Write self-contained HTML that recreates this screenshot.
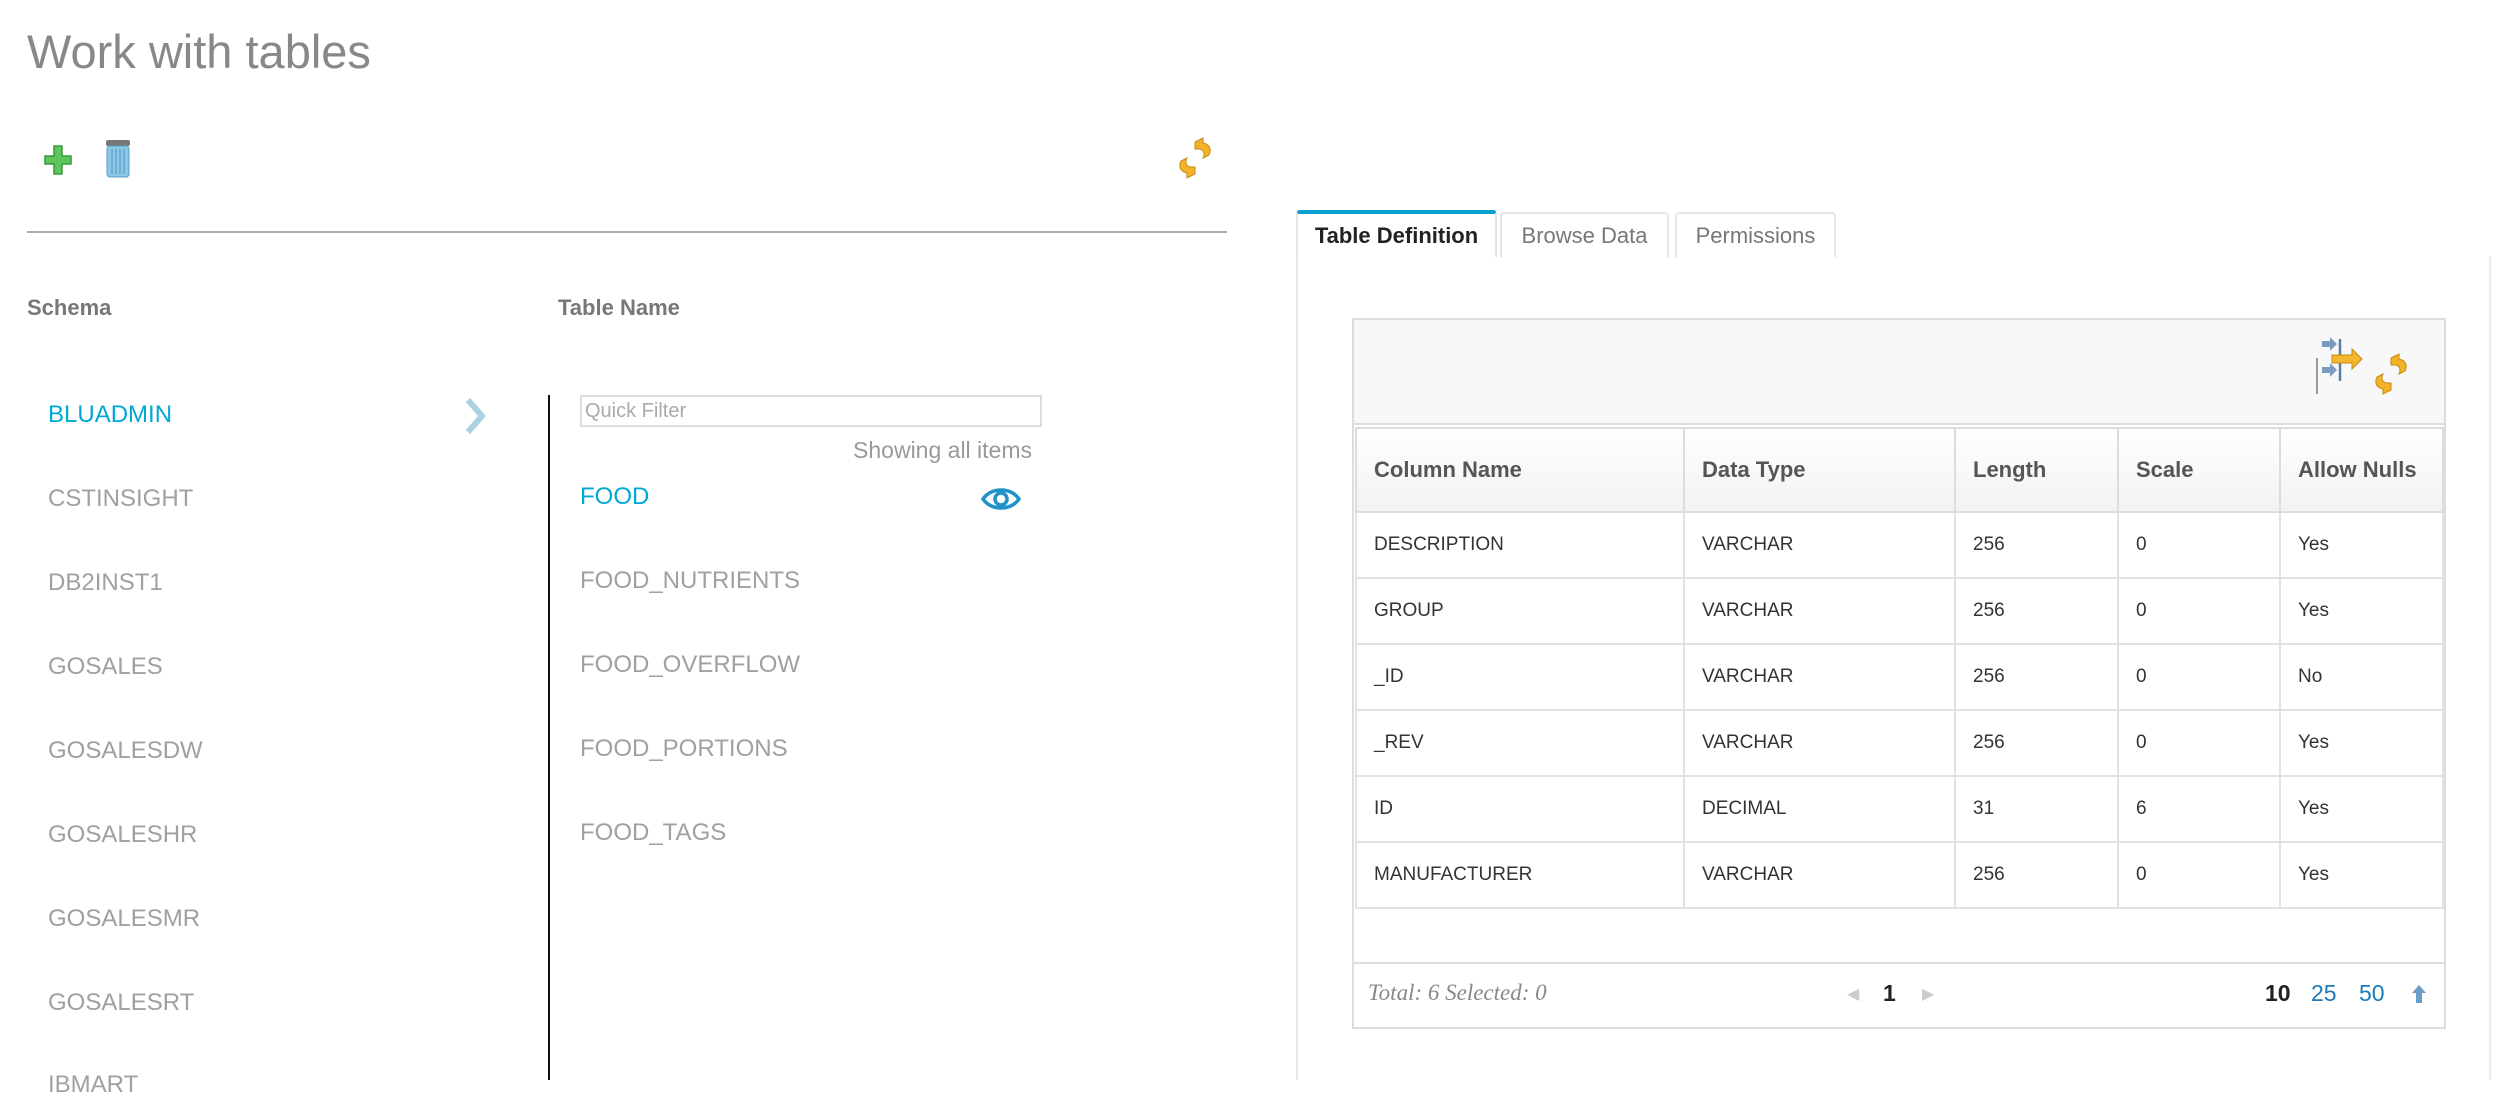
<!DOCTYPE html>
<html><head><meta charset="utf-8"><style>
*{margin:0;padding:0;box-sizing:border-box}
body{width:2506px;height:1080px;background:#fff;position:relative;overflow:hidden;font-family:"Liberation Sans",Arial,sans-serif}
.a{position:absolute;white-space:nowrap}
.sch{font-size:24px;color:#a0a0a0;line-height:30px;height:30px}
.tn{font-size:24px;color:#a0a0a0;line-height:30px;height:30px}
.hd{font-size:22px;font-weight:bold;color:#777}
table{border-collapse:collapse;position:absolute;left:1355px;top:427px;width:1087px;table-layout:fixed}
td,th{border:2px solid #e2e2e2;text-align:left;padding-left:17px;font-size:19px;color:#333;height:66px;font-weight:normal}
th{height:84px;font-weight:bold;font-size:22px;color:#555;background:linear-gradient(#fff,#f2f2f2);border-color:#dcdcdc}
.tab{position:absolute;top:212px;height:45px;border:2px solid #e5e5e5;border-bottom:none;border-radius:4px 4px 0 0;font-size:22px;color:#777;line-height:44px;text-align:center}
</style></head><body>
<div class="a" style="left:27px;top:22px;font-size:47px;color:#888;line-height:60px">Work with tables</div>
<svg class="a" style="left:42px;top:142px" width="32" height="36" viewBox="0 0 32 36"><path d="M12 4h8v10h9v8h-9v10h-8V22H3v-8h9z" fill="#5cc65c" stroke="#3a9a3a" stroke-width="1.5"/></svg>
<svg class="a" style="left:103px;top:138px" width="30" height="42" viewBox="0 0 30 42"><rect x="3" y="2" width="24" height="6" rx="2" fill="#777"/><rect x="4" y="8" width="22" height="31" rx="3" fill="#8cc8e8" stroke="#5a9cc4"/><path d="M9 11v25M13 11v25M17 11v25M21 11v25" stroke="#5a9cc4" stroke-width="1.2"/></svg>
<svg class="a" style="left:1175px;top:136px" width="40" height="44" viewBox="0 0 40 44"><path d="M20 6l8 -4v5c6 1 9 6 6 12l-6 3c2-4 1-8-3-9h-5z" fill="#f2b32a" stroke="#c98a10"/><path d="M20 38l-8 4v-5c-6-1-9-6-6-12l6-3c-2 4-1 8 3 9h5z" fill="#f2b32a" stroke="#c98a10"/></svg>
<div class="a" style="left:27px;top:231px;width:1200px;height:2px;background:#aaa"></div>
<div class="a hd" style="left:27px;top:295px">Schema</div>
<div class="a hd" style="left:558px;top:295px">Table Name</div>
<div class="a sch" style="left:48px;top:400px;color:#00a8d4">BLUADMIN</div>
<svg class="a" style="left:464px;top:398px" width="22" height="36" viewBox="0 0 22 36"><path d="M4 2l14 16L4 34" fill="none" stroke="#a9d3e0" stroke-width="6"/></svg>
<div class="a sch" style="left:48px;top:484px">CSTINSIGHT</div>
<div class="a sch" style="left:48px;top:568px">DB2INST1</div>
<div class="a sch" style="left:48px;top:652px">GOSALES</div>
<div class="a sch" style="left:48px;top:736px">GOSALESDW</div>
<div class="a sch" style="left:48px;top:820px">GOSALESHR</div>
<div class="a sch" style="left:48px;top:904px">GOSALESMR</div>
<div class="a sch" style="left:48px;top:988px">GOSALESRT</div>
<div class="a sch" style="left:48px;top:1070px">IBMART</div>
<div class="a" style="left:548px;top:395px;width:2px;height:685px;background:#111"></div>
<div class="a" style="left:580px;top:395px;width:462px;height:32px;border:2px solid #ddd;font-size:20px;color:#aaa;line-height:28px;padding-left:3px">Quick Filter</div>
<div class="a" style="left:780px;top:437px;width:252px;text-align:right;font-size:23px;color:#999">Showing all items</div>
<div class="a tn" style="left:580px;top:482px;color:#00a8d4">FOOD</div>
<svg class="a" style="left:981px;top:485px" width="40" height="28" viewBox="0 0 40 28"><path d="M2 14C10 2 30 2 38 14C30 26 10 26 2 14z" fill="none" stroke="#1e93c9" stroke-width="3.5"/><circle cx="20" cy="14" r="6" fill="none" stroke="#1e93c9" stroke-width="3.5"/></svg>
<div class="a tn" style="left:580px;top:566px">FOOD_NUTRIENTS</div>
<div class="a tn" style="left:580px;top:650px">FOOD_OVERFLOW</div>
<div class="a tn" style="left:580px;top:734px">FOOD_PORTIONS</div>
<div class="a tn" style="left:580px;top:818px">FOOD_TAGS</div>
<div class="tab" style="left:1296px;width:201px;top:210px;height:47px;border-top:4px solid #0aa0d0;color:#222;font-weight:bold;border-bottom:none;background:#fff">Table Definition</div>
<div class="tab" style="left:1500px;width:169px">Browse Data</div>
<div class="tab" style="left:1675px;width:161px">Permissions</div>
<div class="a" style="left:1296px;top:256px;width:2px;height:824px;background:#e8e8e8"></div>
<div class="a" style="left:2489px;top:256px;width:2px;height:824px;background:#ececec"></div>
<div class="a" style="left:1352px;top:318px;width:1094px;height:711px;border:2px solid #ddd;background:#fff"></div>
<div class="a" style="left:1354px;top:320px;width:1090px;height:105px;background:#f8f8f8;border-bottom:2px solid #ddd"></div>
<div class="a" style="left:2316px;top:358px;width:2px;height:36px;background:#999"></div>
<svg class="a" style="left:2320px;top:335px" width="48" height="50" viewBox="0 0 48 50"><path d="M2 6h8v-4l7 7-7 7v-4H2z" fill="#7a9cc0"/><path d="M2 32h8v-4l7 7-7 7v-4H2z" fill="#7a9cc0"/><path d="M20 4v42" stroke="#5a7ea4" stroke-width="2.5"/><path d="M12 20h20v-6l10 10-10 10v-6H12z" fill="#f2b72e" stroke="#c98a10"/></svg>
<svg class="a" style="left:2370px;top:352px" width="42" height="44" viewBox="0 0 40 44"><path d="M20 6l8 -4v5c6 1 9 6 6 12l-6 3c2-4 1-8-3-9h-5z" fill="#f2b32a" stroke="#c98a10"/><path d="M20 38l-8 4v-5c-6-1-9-6-6-12l6-3c-2 4-1 8 3 9h5z" fill="#f2b32a" stroke="#c98a10"/></svg>
<table>
<colgroup><col style="width:328px"><col style="width:271px"><col style="width:163px"><col style="width:162px"><col style="width:163px"></colgroup>
<tr><th>Column Name</th><th>Data Type</th><th>Length</th><th>Scale</th><th>Allow Nulls</th></tr>
<tr><td>DESCRIPTION</td><td>VARCHAR</td><td>256</td><td>0</td><td>Yes</td></tr>
<tr><td>GROUP</td><td>VARCHAR</td><td>256</td><td>0</td><td>Yes</td></tr>
<tr><td>_ID</td><td>VARCHAR</td><td>256</td><td>0</td><td>No</td></tr>
<tr><td>_REV</td><td>VARCHAR</td><td>256</td><td>0</td><td>Yes</td></tr>
<tr><td>ID</td><td>DECIMAL</td><td>31</td><td>6</td><td>Yes</td></tr>
<tr><td>MANUFACTURER</td><td>VARCHAR</td><td>256</td><td>0</td><td>Yes</td></tr>
</table>
<div class="a" style="left:1354px;top:962px;width:1090px;height:2px;background:#ddd"></div>
<div class="a" style="left:1368px;top:980px;font-family:'Liberation Serif',serif;font-style:italic;font-size:23px;color:#888">Total: 6 Selected: 0</div>
<div class="a" style="left:1847px;top:984px;font-size:16px;color:#ccc">&#9664;</div>
<div class="a" style="left:1883px;top:980px;font-size:23px;font-weight:bold;color:#222">1</div>
<div class="a" style="left:1922px;top:984px;font-size:16px;color:#ccc">&#9654;</div>
<div class="a" style="left:2265px;top:980px;font-size:23px;font-weight:bold;color:#222">10</div>
<div class="a" style="left:2311px;top:980px;font-size:23px;color:#1a7ab8">25</div>
<div class="a" style="left:2359px;top:980px;font-size:23px;color:#1a7ab8">50</div>
<svg class="a" style="left:2411px;top:984px" width="16" height="20" viewBox="0 0 16 20"><path d="M8 1l7 8h-4v10H5V9H1z" fill="#6b9cc8"/></svg>
</body></html>
